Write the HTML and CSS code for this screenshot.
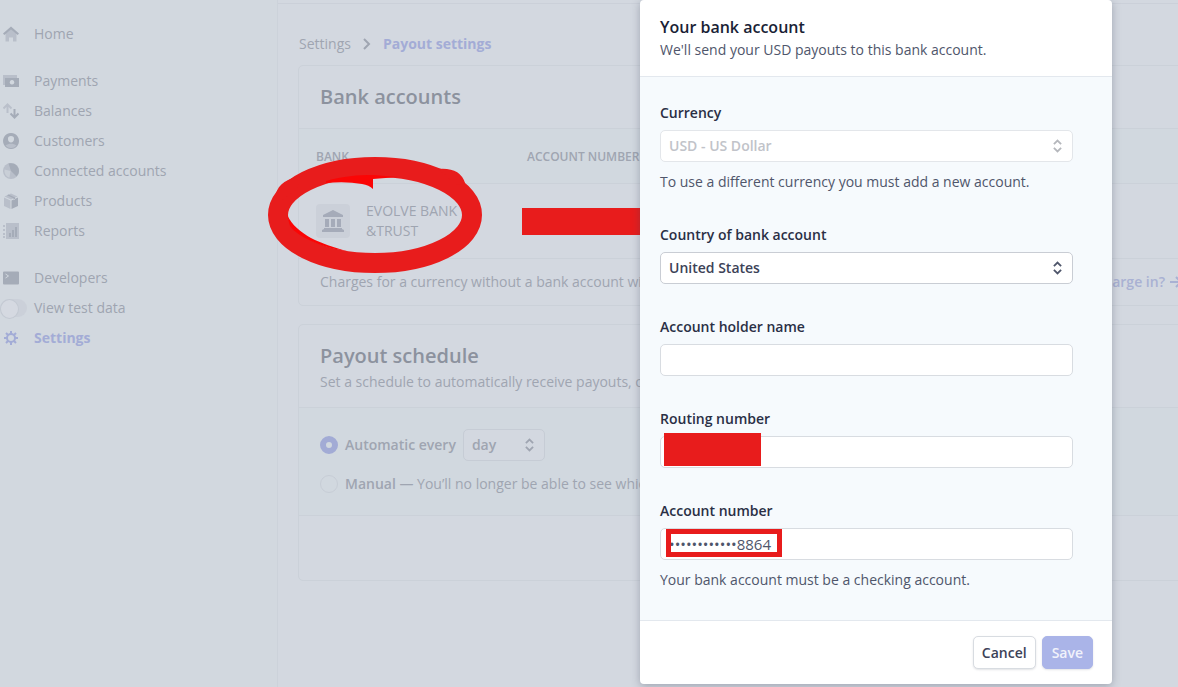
FILE: index.html
```html
<!DOCTYPE html>
<html lang="en">
<head>
    <meta charset="UTF-8">
    <meta name="viewport" content="width=device-width, initial-scale=1.0">
    <title>Payout settings</title>
    <link rel="stylesheet" href="styles.css">
</head>
<body>

<div class="app">
    <!-- Sidebar -->
    <nav class="sidebar">
        <ul class="nav-group">
            <li><a href="#" class="nav-link">
                <svg class="icon" viewBox="0 0 16 16"><path class="soft" d="M2.500 7.500 8 3l5.500 4.500V15.500H10v-4H6v4H2.500z"/><path d="M8 0.500 0 7.500l1.300 1.500L8 3.500l6.700 5.500L16 7.500z"/></svg>
                Home</a></li>
        </ul>
        <ul class="nav-group">
            <li><a href="#" class="nav-link">
                <svg class="icon" viewBox="0 0 16 16"><path class="soft" d="M0 2h14v3H2v7H0z"/><path fill-rule="evenodd" d="M2 5h14v9H2zM9 7a2.300 2.300 0 1 0 .01 0z"/></svg>
                Payments</a></li>
            <li><a href="#" class="nav-link">
                <svg class="icon" viewBox="0 0 16 16"><path class="soft-line" d="M4.500 10V1.500M0.500 5.500l4-4 4 4"/><path class="line" d="M11.500 6v8.500M7.500 10.500l4 4 4-4"/></svg>
                Balances</a></li>
            <li><a href="#" class="nav-link">
                <svg class="icon" viewBox="0 0 16 16"><path fill-rule="evenodd" d="M8 0a8 8 0 1 0 .01 0zM8 3a3 3 0 0 1 3 3.300C11 8 9.700 9.500 8 9.500S5 8 5 6.300A3 3 0 0 1 8 3z"/><path class="soft" d="M2.500 12.500c3-2.500 8-2.500 11 0A7 7 0 0 1 8 15a7 7 0 0 1-5.500-2.500z"/></svg>
                Customers</a></li>
            <li><a href="#" class="nav-link">
                <svg class="icon" viewBox="0 0 16 16"><circle class="soft" cx="8" cy="8" r="8"/><path d="M5.500 0.500C11-1 16 3 16 8c0 2-1 4-2.500 5.500L8 8z"/><path class="pale" d="M1.500 6.500 7.500 8l-1 6.500C3 14 1 10 1.500 6.500z"/></svg>
                Connected accounts</a></li>
            <li><a href="#" class="nav-link">
                <svg class="icon" viewBox="0 0 16 16"><path class="soft" d="m8 0.500 6.500 3L8 6.500l-6.500-3z"/><path class="soft" d="M1 4.500l6.500 3V16L1 13z"/><path d="m15 4.500-6.500 3V16l6.500-3zM4 2.300l1.500-.7 6.500 3v2l-1.500.7v-2z"/></svg>
                Products</a></li>
            <li><a href="#" class="nav-link">
                <svg class="icon" viewBox="0 0 16 16"><path class="soft" d="M3 0h13v16H3zM0 2h2v2H0zM0 6h2v2H0zM0 10h2v2H0zM0 13h2v2H0z"/><path d="M6 10h2v4H6zM9 7h2v7H9zM12 4h2v10h-2z"/></svg>
                Reports</a></li>
        </ul>
        <ul class="nav-group">
            <li><a href="#" class="nav-link">
                <svg class="icon" viewBox="0 0 16 16"><path d="M1 1.500h14a1 1 0 0 1 1 1v11a1 1 0 0 1-1 1H1a1 1 0 0 1-1-1v-11a1 1 0 0 1 1-1z"/><path class="cut" d="m2.500 4 3 2-3 2"/></svg>
                Developers</a></li>
            <li><label class="nav-link"><input type="checkbox" class="switch">View test data</label></li>
            <li><a href="#" class="nav-link active">
                <svg class="icon" viewBox="0 0 16 16"><circle class="line" cx="8" cy="8" r="4"/><path class="line" d="M8 1v3M8 12v3M1 8h3M12 8h3M3 3l2 2M11 11l2 2M3 13l2-2M11 5l2-2"/></svg>
                Settings</a></li>
        </ul>
    </nav>

    <!-- Page content -->
    <main class="main">
        <div class="topbar"></div>
        <div class="content">
            <div class="breadcrumb">
                <a href="#">Settings</a>
                <svg class="crumb-arrow" viewBox="0 0 8 12"><path d="m1 1 5 5-5 5"/></svg>
                <a href="#" class="current">Payout settings</a>
            </div>

            <section class="card">
                <h2 class="card-header">Bank accounts</h2>
                <table class="accounts">
                    <thead>
                        <tr><th class="col-bank">Bank</th><th>Account number</th></tr>
                    </thead>
                    <tbody>
                        <tr>
                            <td>
                                <div class="bank">
                                    <span class="bank-icon"><svg viewBox="0 0 22 22"><path d="M11 0 21 5v2H1V5zM3 9h4v8H3zM9 9h4v8H9zM15 9h4v8h-4zM2 18h18v1l2 1v2H0v-2l2-1z"/></svg></span>
                                    <span>EVOLVE BANK<br>&amp;TRUST</span>
                                </div>
                                <svg class="circle-mark" viewBox="0 0 214 118">
                                    <ellipse cx="107" cy="59" rx="97" ry="48"/>
                                    <path class="edge" d="M8 38C10 28 20 22 34 20L28 34 12 46zM170 13q22-2 27 14l-8 2z"/>
                                    <path class="scribble" d="M58 25C75 20 90 19 105 19L130 21 105 23V33Q101 29 94 28 78 25 58 27zM19 59c10 20 34 29 60 36C60 93 30 82 22 70z"/>
                                </svg>
                            </td>
                            <td class="number-cell"><div class="redacted"></div></td>
                        </tr>
                    </tbody>
                </table>
                <div class="card-note">
                    <span>Charges for a currency without a bank account will</span>
                    <a href="#">What can I charge in?<svg class="link-arrow" viewBox="0 0 12 12"><path d="M0 6h11M6 1l5 5-5 5"/></svg></a>
                </div>
            </section>

            <section class="card">
                <div class="card-header schedule-header">
                    <h2>Payout schedule</h2>
                    <p>Set a schedule to automatically receive payouts, or</p>
                </div>
                <div class="schedule">
                    <div class="option">
                        <input type="radio" name="schedule" id="automatic" checked>
                        <label for="automatic">Automatic every</label>
                        <div class="select-wrap day">
                            <select aria-label="Payout interval"><option>day</option></select>
                            <svg class="chevrons" viewBox="0 0 10 14"><path d="m1 5 4-4 4 4M1 9l4 4 4-4"/></svg>
                        </div>
                    </div>
                    <div class="option">
                        <input type="radio" name="schedule" id="manual">
                        <label for="manual">Manual <span>— You’ll no longer be able to see which</span></label>
                    </div>
                </div>
                <div class="card-footer"></div>
            </section>
        </div>
    </main>
</div>

<!-- Bank account dialog -->
<form class="modal" role="dialog" aria-labelledby="modal-title">
    <header class="modal-header">
        <h1 id="modal-title">Your bank account</h1>
        <p>We'll send your USD payouts to this bank account.</p>
    </header>
    <div class="modal-body">
        <div class="field">
            <label for="currency">Currency</label>
            <div class="select-wrap">
                <select id="currency" disabled><option>USD - US Dollar</option></select>
                <svg class="chevrons" viewBox="0 0 10 14"><path d="m1 5 4-4 4 4M1 9l4 4 4-4"/></svg>
            </div>
            <p class="help">To use a different currency you must add a new account.</p>
        </div>
        <div class="field">
            <label for="country">Country of bank account</label>
            <div class="select-wrap">
                <select id="country"><option>United States</option></select>
                <svg class="chevrons" viewBox="0 0 10 14"><path d="m1 5 4-4 4 4M1 9l4 4 4-4"/></svg>
            </div>
        </div>
        <div class="field">
            <label for="holder">Account holder name</label>
            <input type="text" id="holder">
        </div>
        <div class="field">
            <label for="routing">Routing number</label>
            <div class="input-wrap">
                <input type="text" id="routing">
                <div class="redacted-routing"></div>
            </div>
        </div>
        <div class="field">
            <label for="account">Account number</label>
            <div class="input-wrap">
                <input type="text" id="account" value="••••••••••••8864">
                <div class="box-mark"></div>
            </div>
            <p class="help">Your bank account must be a checking account.</p>
        </div>
    </div>
    <footer class="modal-footer">
        <button type="button" class="btn">Cancel</button>
        <button type="submit" class="btn btn-primary">Save</button>
    </footer>
</form>

</body>
</html>
```

FILE: styles.css
```css
* {
    box-sizing: border-box;
}
body {
    margin: 0;
    font-family: "Open Sans", "Noto Sans", sans-serif;
    font-size: 14px;
    line-height: 20px;
    color: #9fa5b1;
    background-color: #d3d8e0;
}
h1, h2, p, ul {
    margin: 0;
    padding: 0;
}
a {
    color: inherit;
    text-decoration: none;
}
input, select, button {
    font: inherit;
    margin: 0;
}
.app {
    display: flex;
    min-height: 100vh;
    overflow: hidden;
}

/* Sidebar */
.sidebar {
    flex: 0 0 278px;
    padding-top: 19px;
    background-color: #d2d8df;
    border-right: 1px solid #ccd2da;
}
.nav-group {
    list-style: none;
    margin-bottom: 17px;
}
.nav-link {
    display: flex;
    align-items: center;
    height: 30px;
    padding-left: 3px;
    gap: 15px;
}
.nav-link.active {
    color: #a3acd6;
    font-weight: 700;
}
.icon {
    width: 16px;
    height: 16px;
    fill: #a5acb8;
}
.icon .soft {
    fill: #b9bfca;
}
.icon .pale {
    fill: #c9cfd7;
}
.icon .line, .icon .soft-line, .icon .cut {
    fill: none;
    stroke: #a5acb8;
    stroke-width: 2;
}
.icon .soft-line {
    stroke: #bac0cb;
}
.icon .cut {
    stroke: #d2d8df;
    stroke-width: 1;
}
.active .icon .line {
    stroke: #a3acd6;
}
.switch {
    flex: none;
    appearance: none;
    width: 27px;
    height: 18px;
    margin-left: -3px;
    margin-right: -8px;
    border-radius: 9px;
    background-color: #cbd0d9;
}
.switch::before {
    content: "";
    display: block;
    width: 17px;
    height: 18px;
    border: 1px solid #c3c9d2;
    border-radius: 50%;
    background-color: #d5d9e1;
}

/* Page content */
.main {
    flex: 1;
    min-width: 0;
}
.topbar {
    height: 4px;
    border-bottom: 1px solid #cbd0d9;
}
.content {
    padding: 30px 0 0 20px;
    margin-right: -24px;
}
.breadcrumb {
    display: flex;
    align-items: center;
    gap: 12px;
    padding-left: 1px;
    margin-bottom: 11px;
}
.breadcrumb .current {
    color: #a3acd6;
    font-weight: 700;
}
.crumb-arrow {
    width: 8px;
    height: 12px;
    fill: none;
    stroke: #9fa5b1;
    stroke-width: 2;
}
.card {
    border: 1px solid #cbd1d9;
    border-radius: 5px;
    margin-bottom: 18px;
}
.card h2, h2.card-header {
    font-size: 20px;
    line-height: 26px;
    font-weight: 600;
    color: #8c929e;
}
.card-header {
    padding: 18px 21px;
}
.accounts {
    width: 100%;
    border-collapse: collapse;
    table-layout: fixed;
}
.accounts th {
    height: 55px;
    padding: 2px 17px 0;
    text-align: left;
    text-transform: uppercase;
    font-size: 12px;
    font-weight: 600;
    background-color: #d1d8df;
    border: solid #cbd1d9;
    border-width: 1px 0;
}
.accounts .col-bank {
    width: 211px;
}
.accounts td {
    position: relative;
    height: 75px;
    padding: 0 17px;
    border-bottom: 1px solid #cbd1d9;
}
.bank {
    display: flex;
    align-items: center;
    gap: 16px;
    white-space: nowrap;
}
.bank-icon {
    display: flex;
    padding: 6px;
    border-radius: 4px;
    background-color: #cbd0d9;
}
.bank-icon svg {
    width: 22px;
    height: 22px;
    fill: #a5abb9;
}
.accounts .number-cell {
    padding: 0 12px;
}
.redacted {
    width: 140px;
    height: 27px;
    background-color: #e81c1c;
}
.circle-mark {
    position: absolute;
    left: -31px;
    top: -28px;
    width: 214px;
    height: 118px;
    z-index: 1;
}
.circle-mark ellipse {
    fill: none;
    stroke: #e81c1c;
    stroke-width: 20;
}
.circle-mark .edge {
    fill: #e81c1c;
}
.circle-mark .scribble {
    fill: #fb0505;
}
.card-note {
    display: flex;
    justify-content: space-between;
    padding: 13px 19px 13px 21px;
}
.card-note a {
    display: flex;
    align-items: center;
    gap: 5px;
    color: #a9b1d3;
    font-weight: 600;
}
.link-arrow {
    width: 12px;
    height: 12px;
    fill: none;
    stroke: #a9b1d3;
    stroke-width: 2;
}
.schedule-header {
    padding-bottom: 15px;
}
.schedule-header p {
    margin-top: 3px;
}
.schedule {
    display: flex;
    flex-direction: column;
    gap: 13px;
    padding: 21px;
    background-color: #d1d8df;
    border: solid #cbd1d9;
    border-width: 1px 0;
}
.option {
    display: flex;
    align-items: center;
    gap: 7px;
    font-weight: 600;
}
.option span {
    font-weight: 400;
}
.option input {
    appearance: none;
    width: 18px;
    height: 18px;
    border: 1px solid #c7cdd6;
    border-radius: 50%;
}
.option input:checked {
    border: 6px solid #a2abd5;
}
.card-footer {
    height: 64px;
}

/* Form controls */
.select-wrap, .input-wrap {
    position: relative;
}
select, input[type="text"] {
    appearance: none;
    display: block;
    width: 100%;
    height: 32px;
    padding: 0 8px;
    border: 1px solid #d8dce1;
    border-radius: 5px;
    color: #4f566b;
    background-color: #fff;
}
input[type="text"] {
    font-size: 15px;
}
select {
    color: #3c4257;
    font-weight: 600;
    border-color: #c9cdd4;
}
select:disabled {
    color: #c1c3c9;
    opacity: 1;
    border-color: #e3e6ea;
}
.chevrons {
    position: absolute;
    right: 11px;
    top: 9px;
    width: 9px;
    height: 14px;
    fill: none;
    stroke: #4f566b;
    stroke-width: 2;
    pointer-events: none;
}
select:disabled + .chevrons {
    stroke: #b5b7bc;
}
.day {
    width: 82px;
}
.day select {
    color: #9fa5b1;
    background-color: #d3d8e0;
    border-color: #c6ccd5;
}
.day .chevrons {
    stroke: #9fa5b1;
}

/* Bank account dialog */
.modal {
    position: absolute;
    top: 0;
    right: 66px;
    z-index: 2;
    width: 472px;
    color: #4f566b;
    background-color: #fff;
    border-radius: 4px;
    box-shadow: 0 2px 8px rgba(60, 66, 87, 0.35);
}
.modal-header {
    padding: 15px 20px;
}
.modal-header h1 {
    font-size: 16px;
    line-height: 24px;
    font-weight: 600;
    color: #1a1f36;
}
.modal-header p {
    line-height: 22px;
}
.modal-body {
    display: flex;
    flex-direction: column;
    gap: 33px;
    padding: 26px 39px 30px 20px;
    background-color: #f6fafd;
    border: solid #e3e8ee;
    border-width: 1px 0;
}
.field label {
    display: block;
    margin-bottom: 7px;
    font-weight: 600;
    color: #2a2f45;
}
.help {
    margin-top: 10px;
}
.redacted-routing {
    position: absolute;
    left: 4px;
    top: -3px;
    width: 97px;
    height: 33px;
    background-color: #e81c1c;
}
.box-mark {
    position: absolute;
    left: 6px;
    top: 1px;
    width: 116px;
    height: 28px;
    border: 5px solid #e81c1c;
}
.modal-footer {
    display: flex;
    justify-content: flex-end;
    gap: 6px;
    padding: 15px 19px;
}
.btn {
    height: 33px;
    padding: 0 8px;
    border: 1px solid #d8dce1;
    border-radius: 5px;
    font-weight: 600;
    color: #3c4257;
    background-color: #fff;
    box-shadow: 0 1px 2px rgba(60, 66, 87, 0.15);
}
.btn-primary {
    padding: 0 9px;
    color: #f1f2fb;
    background-color: #aab4e8;
    border-color: #aab4e8;
}
```
